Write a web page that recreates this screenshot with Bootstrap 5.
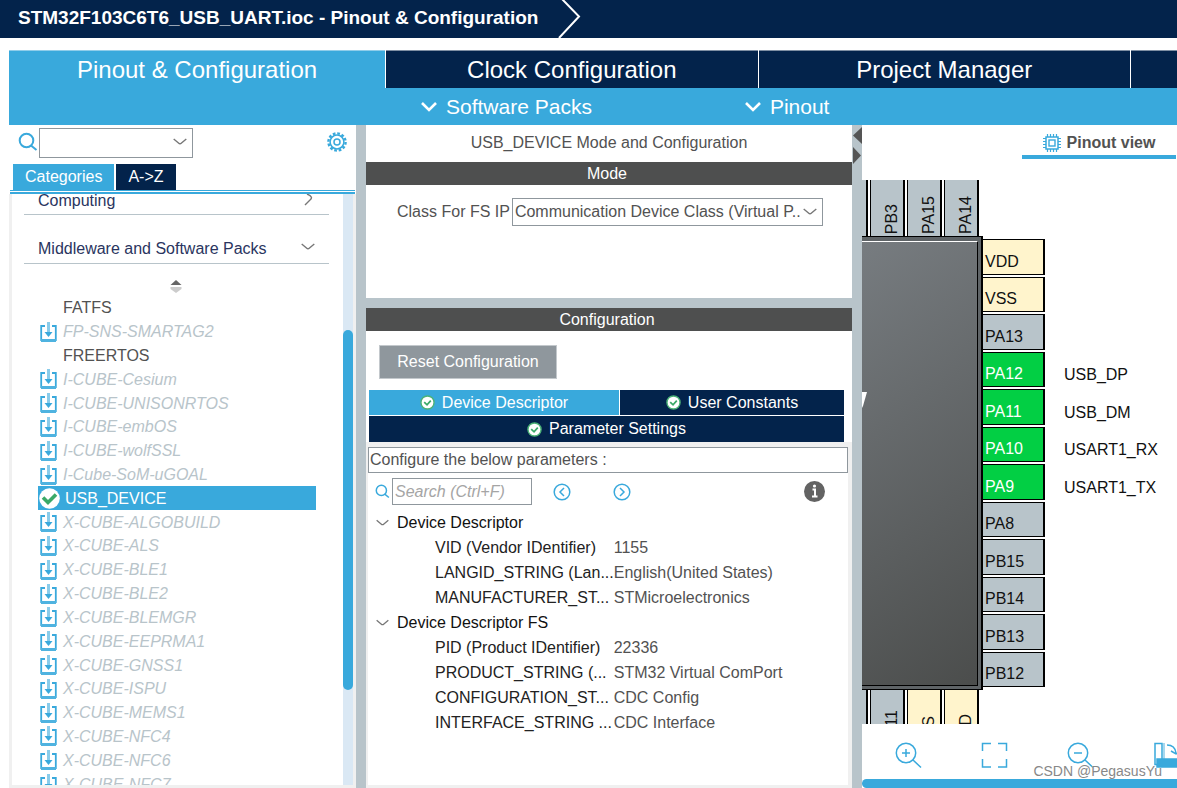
<!DOCTYPE html>
<html lang="en">
<head>
<meta charset="utf-8">
<meta name="viewport" content="width=device-width, initial-scale=1">
<title>STM32F103C6T6_USB_UART.ioc - Pinout &amp; Configuration</title>
<link href="https://cdn.jsdelivr.net/npm/bootstrap@5.3.0/dist/css/bootstrap.min.css" rel="stylesheet">
<style>
:root{--navy:#03234b;--sky:#39a9dc;--steel:#b8c4ca;--dark:#4e4f4f;--edge:#f0f0f0;--line:#8f979d;--txt:#525252}
body{font-family:"Liberation Sans",Arial,sans-serif;font-size:16px;line-height:24px;color:var(--txt)}
a{text-decoration:none}
svg{display:block;flex:none}
.ic{fill:none;stroke:var(--sky);stroke-width:2}
.ic.thin{stroke-width:1.5}
.chev{fill:none;stroke:#777;stroke-width:1.4}
.topbar{background:var(--navy);height:38px;padding-left:18px;gap:20px}
.topbar h1{font-size:19px;line-height:36px}
.maintabs{margin:12px 0 0 9px;height:38px;gap:1px}
.maintabs .nav-link{flex:0 0 31.8%;background:var(--navy);color:#fff;font-size:24px;line-height:38px;padding:0;border-radius:0;border-top:1px solid #7f8fa3}
.maintabs .nav-link.active{flex-basis:32.2%;background:var(--sky);border-top-color:#8fcdea}
.maintabs .nav-link:last-child{flex:1 0 0}
.subbar{background:var(--sky);margin-left:9px;height:37px;padding-left:411px;gap:152px}
.subbar button{font-size:21px;color:#fff;gap:8px;line-height:37px}
.work{min-height:0}
.plain{background:none;border:0;padding:0}
.side{width:347px;margin-left:9px}
.split{width:10px;height:10px;background:var(--steel)}
.split.tall{height:auto}
.mid{width:486px}
.midtitle{height:37px;line-height:36px}
.combo{appearance:none;border:1px solid var(--line);border-radius:0;background:#fff;color:var(--txt);padding:0 2px;height:28px;width:100%}
.combobox svg{position:absolute;right:6px;top:10px;pointer-events:none}
.searchrow{height:39px;padding:3px 9px 0}
.searchrow .combo{height:30px}
.searchrow .combobox{width:154px;margin-left:1px}
.cattabs{padding-left:4px;height:26px;gap:2px}
.cattabs button{background:var(--navy);color:#fff;padding:0 12px}
.cattabs button.active{background:var(--sky)}
.rules{height:4px;margin:0 1px;border-top:1px solid var(--sky);border-bottom:2px solid var(--sky)}
.treebox{min-height:0;border:3px solid var(--edge);border-top:0}
.treebox .inner{padding-left:12px;min-width:0}
.cat{height:49px;width:305px;padding:0 14px;border-bottom:1px solid var(--steel);color:#2a3560}
.cat.below{padding-top:19px}
.cat.cut{height:21px;line-height:26px}
.sorter{padding:14px 16px 0 0;height:32px}
.packs{display:grid;grid-template-rows:repeat(21,1fr);height:500px;width:278px;margin:0 0 0 14px;line-height:23px}
.packs li{min-height:0}
.packs a{color:var(--steel);font-style:italic;gap:6px;height:100%;padding-left:2px}
.packs a.ready{color:var(--txt);font-style:normal;padding-left:25px}
.packs a.picked{background:var(--sky);color:#fff;font-style:normal;padding-left:1px;gap:5px}
.track{width:10px;background:#dae8f4;padding-top:136px}
.thumb{height:360px;background:var(--sky);border-radius:5px}
.bar{background:var(--dark);color:#fff;line-height:23px;height:23px;text-align:center;padding-right:4px}
.mode{height:113px;padding:13px 29px 0 31px;gap:2px}
.mode label{line-height:28px}
.reset{background:var(--line);color:#fff;border:1px solid #c3c8cc;width:178px;height:34px;margin:14px 0 11px 13px}
.cfgtabs{display:grid;grid-template-columns:250fr 224fr;gap:1px;margin:0 8px 0 3px}
.cfgtabs button{background:var(--navy);color:#fff;height:25px;gap:7px}
.cfgtabs button.active{background:var(--sky)}
.cfgtabs .wide{grid-column:1/3;height:26px}
.cfgbox{border:3px solid var(--edge);border-width:5px 4px 3px 2px}
.note{border:1px solid var(--line);height:26px;padding-left:1px}
.find{height:37px;padding:0 23px 0 7px}
.find input{width:140px;height:27px;border:1px solid var(--line);padding:0 2px;margin:0 21px 0 2px}
.find input::placeholder{color:#a5a5a5;font-style:italic;opacity:1}
.find .next{margin-left:42px}
.params{border-collapse:collapse;margin:0}
.params td,.params th{height:25px;line-height:25px;padding:0;font-weight:400;white-space:nowrap}
.params .grp{color:#111}
.params .grp svg{margin-right:8px}
.params .key{color:#222;padding-left:67px;width:242px}
.divider{position:relative}
.divider svg{position:absolute;left:0;top:2px}
.view{min-width:0}
.viewhead{height:55px}
.viewtab{width:154px;height:34px;border-bottom:4px solid var(--sky);color:var(--txt);gap:6px;margin-right:1px;padding-top:6px}
.vrow{gap:2px}
.vrow.up{height:56px}
.vrow.down{height:35px}
.vpin{background:var(--steel);border:solid #000;border-width:0 2px 0 1px;width:35px;height:60px;padding-right:4px}
.up .vpin{height:56px}
.vpin.first{width:6px;border-left:0;padding:0}
.vpin span{writing-mode:vertical-rl;transform:rotate(180deg);line-height:14px;padding-top:2px;color:#111}
.vpin.pwr,.pin.pwr{background:#fff4cc}
.chip{width:121px;height:454px;background:#5f6467;border:solid #000;border-width:1px 2px 1px 0;padding:4px 3px 3px 0}
.chip .die{height:100%;border:1px solid #000;border-width:1px 1px 1px 0;border-top-color:#fff;background:linear-gradient(145deg,#777c80,#4b4d4c)}
.chip svg{margin-top:150px}
.pins{display:grid;grid-template-rows:repeat(12,1fr);gap:2px;height:448px;margin-top:3px}
.pin{background:var(--steel);border:1px solid #000;border-width:1px 2px 1px 0;width:62px;padding-left:2px;color:#111}
.pin.on{background:#02cf44;color:#fff}
.pins span{line-height:24px}
.sig{padding-left:19px;color:#111}
.tools{height:55px;padding-left:33px;gap:59px;padding-top:18px}
.hbar{height:9px;background:var(--sky);border-radius:5px 0 0 5px}
.wm{position:absolute;right:15px;bottom:8px;font-size:14px;line-height:18px;color:#888;text-shadow:0 0 1px #fff}
</style>
</head>
<body class="d-flex flex-column vh-100 overflow-hidden bg-white">
<svg width="0" height="0" class="position-absolute" aria-hidden="true">
<defs>
<symbol id="dl" viewBox="0 0 17 20"><path d="M5 4H1.200V18H15.800V4H12" fill="none" stroke="#39a9dc" stroke-width="1.800"/><path d="M1 18.500H16" stroke="#4fb3e0" stroke-width="3"/><path d="M8.500 0V12" stroke="#8accea" stroke-width="3"/><path d="M4.500 10H12.500L8.500 15Z" fill="#39a9dc"/></symbol>
<symbol id="ok" viewBox="0 0 16 16"><circle cx="8" cy="8" r="7" fill="#fff" stroke="#4cb277" stroke-width="1.500"/><path d="M4.500 7.500L7.500 10.500L11.500 6" fill="none" stroke="#3aa968" stroke-width="1.800"/></symbol>
<symbol id="dn" viewBox="0 0 14 8"><path d="M.7 1L5.500 5Q7 6.500 8.500 5L13.300 1"/></symbol>
<symbol id="mag" viewBox="0 0 20 20"><circle cx="8.500" cy="8.500" r="6.800"/><path d="M13 13.500L18.500 18"/></symbol>
</defs></svg>

<header class="topbar d-flex flex-shrink-0 text-white">
<h1 class="fw-bold m-0 text-nowrap" id="doc">STM32F103C6T6_USB_UART.ioc - Pinout &amp; Configuration</h1>
<svg width="24" height="38" viewBox="0 0 24 38"><path d="M3 -2L21 16.500L1 38" fill="none" stroke="#fff" stroke-width="2"/></svg>
</header>

<nav class="maintabs nav nav-pills flex-nowrap flex-shrink-0 text-center">
<a class="nav-link active" href="#pinout">Pinout &amp; Configuration</a>
<a class="nav-link" href="#clock">Clock Configuration</a>
<a class="nav-link" href="#project">Project Manager</a>
<a class="nav-link" href="#tools" aria-label="Tools"></a>
</nav>
<div class="subbar d-flex flex-shrink-0">
<button class="plain d-flex align-items-center"><svg width="18" height="12" viewBox="0 0 18 12"><path d="M2 2L9 9L16 2" fill="none" stroke="#fff" stroke-width="2.600"/></svg>Software Packs</button>
<button class="plain d-flex align-items-center"><svg width="18" height="12" viewBox="0 0 18 12"><path d="M2 2L9 9L16 2" fill="none" stroke="#fff" stroke-width="2.600"/></svg>Pinout</button>
</div>

<main class="work d-flex flex-fill">
<aside class="side d-flex flex-column flex-shrink-0">
<div class="searchrow d-flex flex-shrink-0">
<label for="ipsearch" class="pt-1"><svg class="ic" width="20" height="20"><use href="#mag"/></svg></label>
<div class="combobox position-relative"><select id="ipsearch" class="combo" aria-label="Search components"><option></option></select><svg class="chev" width="14" height="8"><use href="#dn"/></svg></div>
<button class="plain ms-auto align-self-start mt-1" aria-label="Settings"><svg width="20" height="20" viewBox="0 0 20 20" fill="none" stroke="#39a9dc"><circle cx="10" cy="10" r="8.600" stroke-width="2.400" stroke-dasharray="2.700 1.800"/><circle cx="10" cy="10" r="6.900" stroke-width="1.500"/><circle cx="10" cy="10" r="3" stroke-width="1.500"/></svg></button>
</div>
<div class="cattabs d-flex flex-shrink-0"><button class="plain active">Categories</button><button class="plain">A-&gt;Z</button></div>
<div class="rules flex-shrink-0"></div>
<div class="treebox d-flex flex-fill overflow-hidden">
<div class="inner flex-fill overflow-hidden">
<div class="cat cut d-flex align-items-end overflow-hidden"><span>Computing</span><svg class="chev ms-auto mb-2" width="12" height="12" viewBox="0 0 12 12"><path d="M4 0Q11 3 7 6L2 11"/></svg></div>
<div class="cat below d-flex align-items-center"><span>Middleware and Software Packs</span><svg class="chev ms-auto mb-1" width="14" height="8"><use href="#dn"/></svg></div>
<div class="sorter d-flex"><button class="plain mx-auto" aria-label="Sort"><svg width="12" height="16" viewBox="0 0 12 16"><path d="M.5 6H11.500L6 1Z" fill="#666"/><path d="M.5 8H11.500V10L6 14L.5 10Z" fill="#ccc"/></svg></button></div>
<ul class="packs list-unstyled" id="packs"></ul>
</div>
<div class="track flex-shrink-0"><div class="thumb"></div></div>
</div>
</aside>
<div class="split tall flex-shrink-0"></div>

<section class="mid d-flex flex-column flex-shrink-0">
<div class="midtitle text-center flex-shrink-0">USB_DEVICE Mode and Configuration</div>
<div class="bar flex-shrink-0">Mode</div>
<div class="mode d-flex flex-shrink-0">
<label for="cls" class="text-nowrap">Class For FS IP</label>
<div class="combobox position-relative flex-fill"><select id="cls" class="combo"><option>Communication Device Class (Virtual P..</option></select><svg class="chev" width="14" height="8"><use href="#dn"/></svg></div>
</div>
<div class="split w-100 flex-shrink-0"></div>
<div class="bar flex-shrink-0">Configuration</div>
<button class="plain reset flex-shrink-0">Reset Configuration</button>
<div class="cfgtabs flex-shrink-0">
<button class="plain active d-flex align-items-center justify-content-center"><svg width="15" height="15"><use href="#ok"/></svg>Device Descriptor</button>
<button class="plain d-flex align-items-center justify-content-center"><svg width="15" height="15"><use href="#ok"/></svg>User Constants</button>
<button class="plain wide d-flex align-items-center justify-content-center"><svg width="15" height="15"><use href="#ok"/></svg>Parameter Settings</button>
</div>
<div class="cfgbox flex-fill overflow-hidden">
<div class="note">Configure the below parameters :</div>
<div class="find d-flex align-items-center">
<label for="find"><svg class="ic" width="15" height="15"><use href="#mag"/></svg></label>
<input id="find" type="text" placeholder="Search (Ctrl+F)">
<button class="plain" aria-label="Previous"><svg width="18" height="18" viewBox="0 0 18 18" class="ic thin"><circle cx="9" cy="9" r="7.800"/><path d="M11 5L7 9L11 13"/></svg></button>
<button class="plain next" aria-label="Next"><svg width="18" height="18" viewBox="0 0 18 18" class="ic thin"><circle cx="9" cy="9" r="7.800"/><path d="M7 5L11 9L7 13"/></svg></button>
<button class="plain ms-auto" aria-label="Information"><svg width="21" height="21" viewBox="0 0 21 21"><circle cx="10.500" cy="10.500" r="10.500" fill="#636363"/><path d="M8.500 8.500H11V15M8 15.500H13.500" fill="none" stroke="#fff" stroke-width="2"/><circle cx="10.500" cy="5" r="1.600" fill="#fff"/></svg></button>
</div>
<table class="params"><tbody id="params"></tbody></table>
</div>
</section>
<div class="split tall divider flex-shrink-0"><svg width="10" height="40" viewBox="0 0 10 40" fill="#555"><path d="M10 0V17L1 8.500Z"/><path d="M1 20V37L9 28.500Z"/></svg></div>

<section class="view d-flex flex-column flex-fill overflow-hidden position-relative">
<div class="viewhead flex-shrink-0 d-flex justify-content-end">
<a href="#view" class="viewtab d-flex align-items-center justify-content-center fw-bold"><svg width="18" height="18" viewBox="0 0 18 18" fill="none" stroke="#39a9dc"><path d="M4.500 0V18M7.500 0V18M10.500 0V18M13.500 0V18M0 4.500H18M0 7.500H18M0 10.500H18M0 13.500H18" stroke-width="1.200"/><rect x="3" y="3" width="12" height="12" fill="#fff" stroke-width="1.500"/><rect x="6" y="6" width="6" height="6" stroke-width="1.400"/></svg>Pinout view</a>
</div>
<div class="flex-fill overflow-hidden">
<div class="vrow up d-flex" id="up"></div>
<div class="d-flex">
<div class="chip flex-shrink-0"><div class="die overflow-hidden"><svg width="5" height="16" viewBox="0 0 5 16"><path d="M0 0H5L1 14L0 16Z" fill="#fff"/></svg></div></div>
<div class="pins" id="pins"></div>
</div>
<div class="vrow down d-flex overflow-hidden" id="down"></div>
</div>
<div class="tools d-flex flex-shrink-0">
<button class="plain flex-shrink-0 align-self-start" aria-label="Zoom in"><svg width="27" height="27" viewBox="0 0 27 27" class="ic thin"><circle cx="11" cy="11" r="9.700"/><path d="M18 18L26 25.500M11 7V15M7 11H15"/></svg></button>
<button class="plain flex-shrink-0 align-self-start" aria-label="Fit"><svg width="27" height="27" viewBox="0 0 27 27" class="ic thin"><path d="M1.500 9V1.500H10M17 1.500H25.500V9M25.500 17V25H17M10 25H1.500V17"/></svg></button>
<button class="plain flex-shrink-0 align-self-start" aria-label="Zoom out"><svg width="27" height="27" viewBox="0 0 27 27" class="ic thin"><circle cx="11" cy="11" r="9.700"/><path d="M18 18L26 25.500M7 11H15"/></svg></button>
<button class="plain flex-shrink-0 align-self-start" aria-label="Rotate"><svg width="30" height="27" viewBox="0 0 30 27" class="ic thin"><path d="M2 1.500H9V22.500H2ZM14 3Q22 3 23 11M18 9L23 12L28 9"/><path d="M11 1V17" stroke="#a8d8ee" stroke-width="2"/><path d="M4 17H30V25H4Z" fill="#39a9dc"/></svg></button>
</div>
<div class="hbar flex-shrink-0"></div>
<div class="wm">CSDN @PegasusYu</div>
</section>
</main>

<script src="https://cdn.jsdelivr.net/npm/bootstrap@5.3.0/dist/js/bootstrap.bundle.min.js"></script>
<script>
const packs = ['FATFS','FP-SNS-SMARTAG2','FREERTOS','I-CUBE-Cesium','I-CUBE-UNISONRTOS','I-CUBE-embOS','I-CUBE-wolfSSL','I-Cube-SoM-uGOAL','USB_DEVICE','X-CUBE-ALGOBUILD','X-CUBE-ALS','X-CUBE-BLE1','X-CUBE-BLE2','X-CUBE-BLEMGR','X-CUBE-EEPRMA1','X-CUBE-GNSS1','X-CUBE-ISPU','X-CUBE-MEMS1','X-CUBE-NFC4','X-CUBE-NFC6','X-CUBE-NFC7'];
const big = '<svg width="21" height="21" viewBox="0 0 21 21"><circle cx="10.500" cy="10.500" r="10.300" fill="#fff"/><path d="M4 9.500L9 14.500L17 6.500" fill="none" stroke="#3aa968" stroke-width="3.600"/></svg>';
const dl = '<svg width="17" height="20"><use href="#dl"/></svg>';
document.getElementById('packs').innerHTML = packs.map(p => {
  const ready = p === 'FATFS' || p === 'FREERTOS', picked = p === 'USB_DEVICE';
  return `<li><a href="#${p}" class="d-flex align-items-center ${ready ? 'ready' : picked ? 'picked' : ''}">${ready ? '' : picked ? big : dl}<span>${p}</span></a></li>`;
}).join('');

const groups = [
 ['Device Descriptor', [['VID (Vendor IDentifier)','1155'],['LANGID_STRING (Lan...','English(United States)'],['MANUFACTURER_ST...','STMicroelectronics']]],
 ['Device Descriptor FS', [['PID (Product IDentifier)','22336'],['PRODUCT_STRING (...','STM32 Virtual ComPort'],['CONFIGURATION_ST...','CDC Config'],['INTERFACE_STRING ...','CDC Interface']]]
];
document.getElementById('params').innerHTML = groups.map(([g, rows]) =>
  `<tr><th colspan="2" class="grp"><div class="d-flex align-items-center ps-2"><svg class="chev" width="13" height="8"><use href="#dn"/></svg>${g}</div></th></tr>` +
  rows.map(([k, v]) => `<tr><th class="key" scope="row">${k}</th><td>${v}</td></tr>`).join('')).join('');

const side = [['VDD','pwr'],['VSS','pwr'],['PA13',''],['PA12','on','USB_DP'],['PA11','on','USB_DM'],['PA10','on','USART1_RX'],['PA9','on','USART1_TX'],['PA8',''],['PB15',''],['PB14',''],['PB13',''],['PB12','']];
document.getElementById('pins').innerHTML = side.map(([n, c, s]) =>
  `<div class="d-flex align-items-stretch"><div class="pin ${c} d-flex align-items-end"><span>${n}</span></div>${s ? `<div class="sig d-flex align-items-end"><span>${s}</span></div>` : ''}</div>`).join('');
const vert = list => '<div class="vpin first flex-shrink-0"></div>' + list.map(([n, c]) =>
  `<div class="vpin ${c} d-flex flex-shrink-0 align-items-end justify-content-end"><span>${n}</span></div>`).join('');
document.getElementById('up').innerHTML = vert([['PB3',''],['PA15',''],['PA14','']]);
document.getElementById('down').innerHTML = vert([['PB11',''],['VSS','pwr'],['VDD','pwr']]);
</script>
</body>
</html>
